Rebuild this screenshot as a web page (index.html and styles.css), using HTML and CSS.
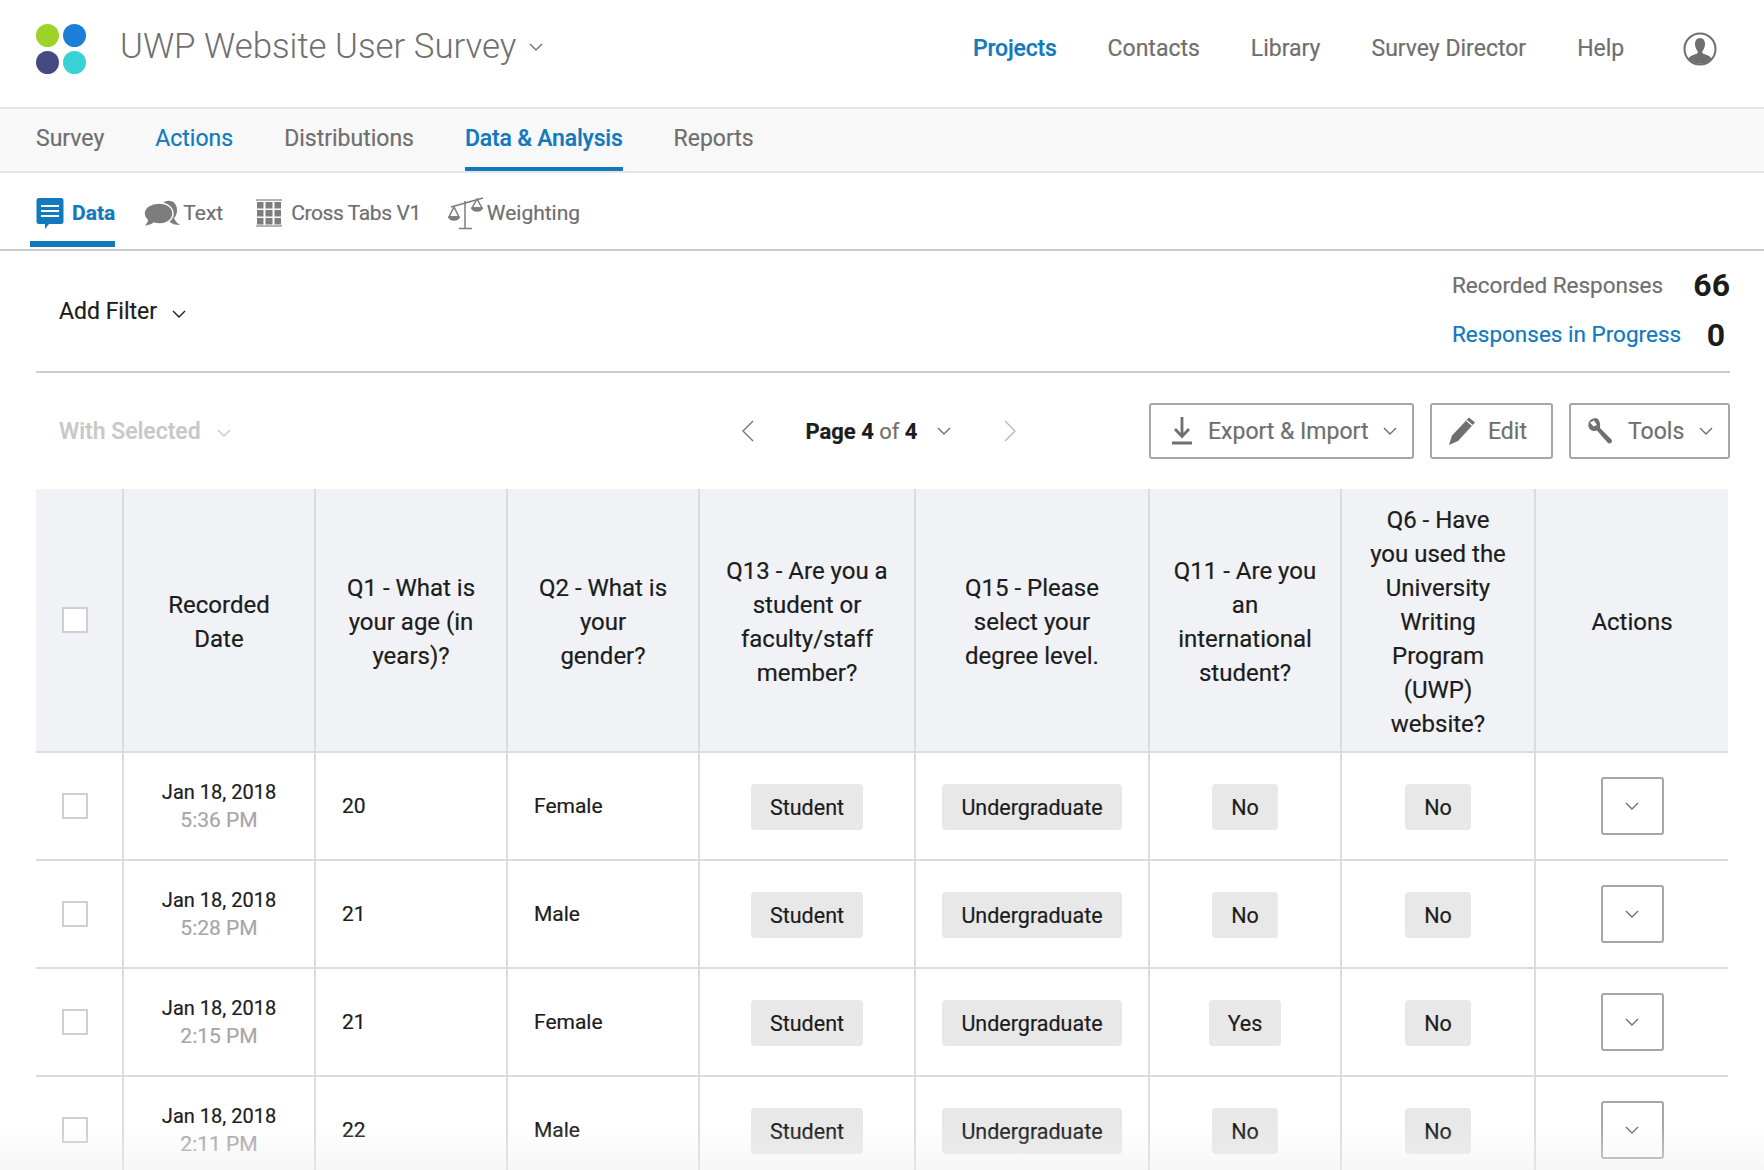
FILE: index.html
```html
<!DOCTYPE html>
<html lang="en">
<head>
    <meta charset="UTF-8">
    <title>UWP Website User Survey</title>
    <link rel="stylesheet" href="styles.css">
</head>
<body>
    <svg class="sprite" width="0" height="0">
        <symbol id="chev" viewBox="0 0 14 8"><path d="M1 1l6 6 6-6" fill="none" stroke="currentColor" stroke-width="1.4"/></symbol>
    </svg>

    <header class="top-bar">
        <svg class="logo" viewBox="0 0 50 50" width="50" height="50">
            <circle cx="11.5" cy="11.5" r="11.5" fill="#9bd426"/>
            <circle cx="38.5" cy="11.5" r="11.5" fill="#1c7ed6"/>
            <circle cx="11.5" cy="38.5" r="11.5" fill="#454a80"/>
            <circle cx="38.5" cy="38.5" r="11.5" fill="#38d1d6"/>
        </svg>
        <div class="project-title">UWP Website User Survey</div>
        <svg class="chev title-chev"><use href="#chev"/></svg>
        <nav class="top-nav">
            <a class="active">Projects</a>
            <a>Contacts</a>
            <a>Library</a>
            <a>Survey Director</a>
            <a>Help</a>
        </nav>
        <svg class="user-icon" viewBox="0 0 34 34" width="34" height="34">
            <circle cx="17" cy="17" r="15.5" fill="#fff" stroke="#6f6f6f" stroke-width="2"/>
            <path d="M17 6c-3.400 0-5 2.800-5 6 0 3 1.200 5.500 2.600 7v2.200c-3 1.200-7.400 2.200-9 5.300a15 15 0 0 0 22.800 0c-1.600-3.100-6-4.100-9-5.300V19c1.400-1.500 2.600-4 2.600-7 0-3.200-1.600-6-5-6z" fill="#6f6f6f"/>
        </svg>
    </header>

    <nav class="section-nav">
        <a>Survey</a>
        <a class="link">Actions</a>
        <a>Distributions</a>
        <a class="current">Data &amp; Analysis</a>
        <a>Reports</a>
    </nav>

    <nav class="sub-nav">
        <a class="sub-tab current">
            <svg viewBox="0 0 28 32" width="28" height="32">
                <path d="M3 1h22a2.500 2.500 0 0 1 2.500 2.500v21a2.500 2.500 0 0 1-2.500 2.500H13l-4 5v-5H3a2.500 2.500 0 0 1-2.500-2.500v-21A2.500 2.500 0 0 1 3 1z" fill="#1279bd"/>
                <path d="M5 9h18M5 14h18M5 19h18" stroke="#fff" stroke-width="2"/>
            </svg>
            Data
        </a>
        <a class="sub-tab tab-text">
            <svg viewBox="0 0 38 28" width="38" height="28">
                <path d="M21 3c6-3 13 0 13 8 0 4-1 6-3 8 1 3 3 5 6 7-5 0-8-1-11-4z" fill="#7d7d7d"/>
                <path d="M16 4c8 0 14 4.500 14 10.500S24 25 16 25c-2 0-3-.2-5-.8C8 26.500 4 27.500 0 27.500c2.500-2 4-4 4.300-6.500C2 19 1 17 1 14.500 1 8.500 8 4 16 4z" fill="#7d7d7d" stroke="#fff" stroke-width="1.500"/>
            </svg>
            Text
        </a>
        <a class="sub-tab tab-cross">
            <svg viewBox="0 0 26 28" width="26" height="28">
                <path d="M0 1h26M0 27h26" stroke="#9a9a9a" stroke-width="1.500"/>
                <path fill="#7d7d7d" d="M1 3h6.500v6.500H1zM9.500 3h7v6.500h-7zM18.500 3H25v6.500h-6.500zM1 11h6.500v6.500H1zM9.500 11h7v6.500h-7zM18.500 11H25v6.500h-6.500zM1 19h6.500v6.500H1zM9.500 19h7v6.500h-7zM18.500 19H25v6.500h-6.500z"/>
            </svg>
            Cross Tabs V1
        </a>
        <a class="sub-tab tab-weight">
            <svg viewBox="0 0 36 34" width="36" height="34" fill="none" stroke="#7d7d7d" stroke-width="1.500">
                <path d="M17 5v27M11 32.500h13M3 11L35 2"/>
                <path d="M6 11L1 21h10zM29 3l-5 9h10z"/>
                <path d="M1 21a5 3 0 0 0 10 0zM24 12a5 3 0 0 0 10 0z" fill="#7d7d7d"/>
            </svg>
            Weighting
        </a>
    </nav>

    <main class="content">
        <section class="filter-row">
            <div class="add-filter">Add Filter <svg class="chev"><use href="#chev"/></svg></div>
            <div class="counts">
                <div class="count-line"><span class="count-label">Recorded Responses</span><b>66</b></div>
                <div class="count-line"><span class="count-label link">Responses in Progress</span><b class="zero">0</b></div>
            </div>
        </section>

        <section class="toolbar">
            <div class="with-selected">With Selected <svg class="chev"><use href="#chev"/></svg></div>
            <div class="pager">
                <svg class="arrow" viewBox="0 0 12 22" width="12" height="22"><path d="M11 1L1 11l10 10" fill="none" stroke="#6f6f6f" stroke-width="1.300"/></svg>
                <div class="page-label"><b>Page 4</b> of <b>4</b></div>
                <svg class="chev"><use href="#chev"/></svg>
                <svg class="arrow next" viewBox="0 0 12 22" width="12" height="22"><path d="M1 1l10 10L1 21" fill="none" stroke="#b5b5b5" stroke-width="1.300"/></svg>
            </div>
            <div class="tool-buttons">
                <button class="btn btn-export">
                    <svg viewBox="0 0 22 30" width="22" height="30"><path d="M11 1v19M4 13l7 7.500 7-7.500" fill="none" stroke="#6f6f6f" stroke-width="2.800"/><path d="M1 27h20" stroke="#6f6f6f" stroke-width="3"/></svg>
                    Export &amp; Import
                    <svg class="chev"><use href="#chev"/></svg>
                </button>
                <button class="btn btn-edit">
                    <svg viewBox="0 0 28 30" width="28" height="30"><path d="M21 1.500l6 5L10 25l-9 4 3-9.500z" fill="#6f6f6f"/><path d="M18.500 4.500l6 5" stroke="#fff" stroke-width="1.200"/></svg>
                    Edit
                </button>
                <button class="btn btn-tools">
                    <svg viewBox="0 0 26 26" width="26" height="26"><path d="M10 .5C5.500-.5.500 3 1.500 8.500c.5 2.500 3 4.500 6 4.500l2.500-.5 10.500 12c1.200 1.300 2.700 1.300 3.700.3s1.100-2.600-.2-3.800L13 10c.5-4.500-.5-8.500-3-9.500zM7 2.500L3 4.500l3.500 4 3.500-1.500z" fill="#6f6f6f" fill-rule="evenodd"/></svg>
                    Tools
                    <svg class="chev"><use href="#chev"/></svg>
                </button>
            </div>
        </section>

        <section class="table">
            <div class="row head">
                <div class="cell check"><span class="box"></span></div>
                <div class="cell">Recorded<br>Date</div>
                <div class="cell">Q1 - What is<br>your age (in<br>years)?</div>
                <div class="cell">Q2 - What is<br>your<br>gender?</div>
                <div class="cell">Q13 - Are you a<br>student or<br>faculty/staff<br>member?</div>
                <div class="cell">Q15 - Please<br>select your<br>degree level.</div>
                <div class="cell">Q11 - Are you<br>an<br>international<br>student?</div>
                <div class="cell">Q6 - Have<br>you used the<br>University<br>Writing<br>Program<br>(UWP)<br>website?</div>
                <div class="cell">Actions</div>
            </div>

            <div class="row">
                <div class="cell check"><span class="box"></span></div>
                <div class="cell date">Jan 18, 2018<span>5:36 PM</span></div>
                <div class="cell plain">20</div>
                <div class="cell plain">Female</div>
                <div class="cell"><span class="pill">Student</span></div>
                <div class="cell"><span class="pill">Undergraduate</span></div>
                <div class="cell"><span class="pill">No</span></div>
                <div class="cell"><span class="pill">No</span></div>
                <div class="cell"><button class="row-action"><svg class="chev"><use href="#chev"/></svg></button></div>
            </div>
            <div class="row">
                <div class="cell check"><span class="box"></span></div>
                <div class="cell date">Jan 18, 2018<span>5:28 PM</span></div>
                <div class="cell plain">21</div>
                <div class="cell plain">Male</div>
                <div class="cell"><span class="pill">Student</span></div>
                <div class="cell"><span class="pill">Undergraduate</span></div>
                <div class="cell"><span class="pill">No</span></div>
                <div class="cell"><span class="pill">No</span></div>
                <div class="cell"><button class="row-action"><svg class="chev"><use href="#chev"/></svg></button></div>
            </div>
            <div class="row">
                <div class="cell check"><span class="box"></span></div>
                <div class="cell date">Jan 18, 2018<span>2:15 PM</span></div>
                <div class="cell plain">21</div>
                <div class="cell plain">Female</div>
                <div class="cell"><span class="pill">Student</span></div>
                <div class="cell"><span class="pill">Undergraduate</span></div>
                <div class="cell"><span class="pill">Yes</span></div>
                <div class="cell"><span class="pill">No</span></div>
                <div class="cell"><button class="row-action"><svg class="chev"><use href="#chev"/></svg></button></div>
            </div>
            <div class="row">
                <div class="cell check"><span class="box"></span></div>
                <div class="cell date">Jan 18, 2018<span>2:11 PM</span></div>
                <div class="cell plain">22</div>
                <div class="cell plain">Male</div>
                <div class="cell"><span class="pill">Student</span></div>
                <div class="cell"><span class="pill">Undergraduate</span></div>
                <div class="cell"><span class="pill">No</span></div>
                <div class="cell"><span class="pill">No</span></div>
                <div class="cell"><button class="row-action"><svg class="chev"><use href="#chev"/></svg></button></div>
            </div>
        </section>
    </main>

    <div class="bottom-fade"></div>
</body>
</html>
```

FILE: styles.css
```css
:root {
    --blue: #1279bd;
    --grey: #6f6f6f;
    --line: #dcdcde;
    --ink: #1c1c1c;
}

html, body {
    margin: 0;
    height: 1170px;
    overflow: hidden;
}

body {
    background: #fff;
    color: var(--ink);
    font-family: Roboto, "Liberation Sans", sans-serif;
    font-size: 21px;
    position: relative;
    -webkit-text-stroke: 0.2px;
}

.sprite {
    position: absolute;
}

.chev {
    width: 14px;
    height: 8px;
    color: var(--grey);
    flex: none;
}

a {
    color: var(--grey);
}

.link {
    color: var(--blue);
}

/* top header */
.top-bar {
    height: 107px;
    display: flex;
    align-items: center;
    padding-left: 36px;
}

.logo {
    margin-top: -10px;
    flex: none;
}

.project-title {
    margin-left: 34px;
    font-size: 34.800px;
    font-weight: 300;
    color: var(--grey);
    margin-top: -15px;
    width: 400px;
    -webkit-text-stroke: 0;
}

.title-chev {
    margin-left: 9px;
    margin-top: -14px;
}

.top-nav {
    margin-left: 430px;
    margin-top: -10px;
    display: flex;
    gap: 51px;
    font-size: 23px;
}

.top-nav .active {
    color: var(--blue);
    font-weight: 500;
    letter-spacing: -0.2px;
}

.user-icon {
    margin-left: 59px;
    margin-top: -10px;
}

/* Survey / Actions / ... */
.section-nav {
    height: 62px;
    background: #f8f8f8;
    border-top: 2px solid #e6e6e6;
    border-bottom: 2px solid #e6e6e6;
    display: flex;
    gap: 51px;
    padding-left: 36px;
    font-size: 23px;
    line-height: 60px;
}

.section-nav .current {
    color: var(--blue);
    font-weight: 500;
    height: 58px;
    border-bottom: 4px solid var(--blue);
    letter-spacing: -0.2px;
}

/* Data / Text / ... */
.sub-nav {
    height: 76px;
    display: flex;
    padding-left: 30px;
    border-bottom: 2px solid #cdcdcd;
    font-size: 21px;
}

.sub-tab {
    display: flex;
    align-items: center;
    height: 76px;
    padding-top: 4px;
    box-sizing: border-box;
    margin-right: 29px;
    gap: 8px;
}

.sub-tab.current {
    color: var(--blue);
    font-weight: 700;
    border-bottom: 6px solid var(--blue);
    padding: 12px 0 0 6px;
    margin-right: 28px;
    height: 74px;
}

.tab-text {
    gap: 2px;
    margin-right: 33px;
}

.tab-cross {
    gap: 9px;
    margin-right: 27px;
    letter-spacing: -0.4px;
}

.tab-weight {
    gap: 3px;
}

/* filter and counts */
.content {
    padding: 0 36px;
}

.filter-row {
    height: 120px;
    border-bottom: 2px solid #cdcdcd;
    display: flex;
    justify-content: space-between;
    align-items: center;
    margin-right: -2px;
}

.add-filter {
    margin-left: 23px;
    font-size: 23px;
    display: flex;
    align-items: center;
    gap: 15px;
}

.add-filter .chev {
    color: var(--ink);
    margin-top: 5px;
}

.counts {
    display: flex;
    flex-direction: column;
    gap: 11px;
    margin-top: -4px;
}

.count-line {
    display: flex;
    align-items: center;
    font-size: 22.500px;
    color: var(--grey);
    height: 38px;
    width: 278px;
    justify-content: space-between;
}

.count-line b {
    font-size: 32px;
    font-weight: 700;
    color: var(--ink);
    -webkit-text-stroke: 0;
}

.count-line .zero {
    margin-right: 5px;
    margin-top: 3px;
}

/* toolbar */
.toolbar {
    height: 116px;
    display: flex;
    align-items: center;
    margin-right: -2px;
}

.with-selected {
    margin-left: 23px;
    width: 684px;
    font-size: 23px;
    font-weight: 500;
    color: #c8c8c8;
    display: flex;
    align-items: center;
    gap: 16px;
}

.with-selected .chev {
    color: #c8c8c8;
    margin-top: 4px;
}

.pager {
    display: flex;
    align-items: center;
    width: 407px;
}

.page-label {
    margin-left: 51px;
    font-size: 22px;
    color: var(--grey);
}

.page-label b {
    color: var(--ink);
    font-weight: 700;
}

.pager .chev {
    margin-left: 20px;
}

.arrow.next {
    margin-left: 53px;
}

.tool-buttons {
    display: flex;
    gap: 16px;
}

.btn {
    height: 56px;
    border: 2px solid #a6a6a6;
    border-radius: 3px;
    background: #fff;
    color: var(--grey);
    font: inherit;
    font-size: 23px;
    display: flex;
    align-items: center;
    padding: 0 0 0 16px;
    box-sizing: border-box;
    -webkit-text-stroke: 0.2px;
}

.btn-export {
    width: 265px;
    padding-left: 20px;
    gap: 15px;
}

.btn-edit {
    width: 123px;
    gap: 12px;
}

.btn-tools {
    width: 161px;
    gap: 15px;
}

/* responses table */
.row {
    display: grid;
    grid-template-columns: 86px 192px 192px 192px 216px 234px 192px 194px 1fr;
    height: 106px;
    border-bottom: 2px solid var(--line);
}

.row.head {
    height: 262px;
    background: #f1f2f6;
    font-size: 24px;
    line-height: 34px;
}

.head .cell {
    padding-top: 3px;
    box-sizing: border-box;
}

.cell {
    display: flex;
    align-items: center;
    justify-content: center;
    text-align: center;
    border-left: 2px solid var(--line);
}

.cell:first-child {
    border-left: 0;
}

.head .cell.check,
.cell.check {
    justify-content: flex-start;
    padding: 0 0 0 26px;
}

.box {
    width: 22px;
    height: 22px;
    border: 2px solid #cfcfcf;
    background: #fff;
}

.cell.plain {
    justify-content: flex-start;
    padding-left: 26px;
}

.cell.date {
    flex-direction: column;
    font-size: 20px;
    line-height: 28px;
}

.cell.date span {
    color: #a6a6a6;
    font-size: 21px;
}

.pill {
    height: 46px;
    padding: 0 19px;
    background: #e8e8e8;
    border-radius: 4px;
    line-height: 47px;
    margin-top: 2px;
    font-size: 21.500px;
}

.row-action {
    width: 63px;
    height: 58px;
    padding: 0;
    border: 2px solid #a6a6a6;
    border-radius: 3px;
    background: #fff;
    display: flex;
    align-items: center;
    justify-content: center;
}

.bottom-fade {
    position: absolute;
    left: 0;
    right: 0;
    bottom: 0;
    height: 44px;
    background: linear-gradient(rgba(238, 238, 238, 0), rgba(238, 238, 238, 0.5));
    pointer-events: none;
}
```
